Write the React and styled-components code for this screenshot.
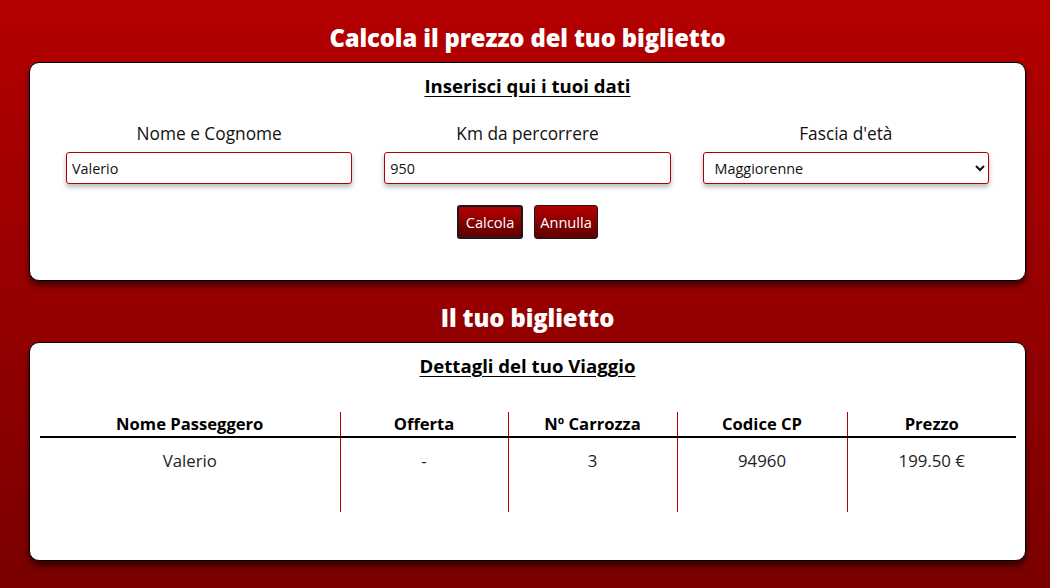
import React from "react";
import styled, { createGlobalStyle } from "styled-components";

const Global = createGlobalStyle`
  html, body { margin: 0; padding: 0; }
  body {
    min-height: 100vh;
    background: linear-gradient(to bottom, #b40000 0%, #7a0000 100%);
    font-family: "Open Sans", "Noto Sans", sans-serif;
  }
  #root { min-height: 100vh; }
`;

const Page = styled.main`
  padding: 20px 24px 20px 29px;
  display: flex;
  flex-direction: column;
  box-sizing: border-box;
`;

const Title = styled.h1`
  margin: 0 0 6px;
  text-align: center;
  color: #fff;
  font-size: 23.8px;
  font-weight: 800;
  line-height: 36px;
  letter-spacing: -0.1px;
`;

const Card = styled.section`
  background: #fff;
  border: 1px solid #000;
  border-radius: 10px;
  box-shadow: 0 5px 6px rgba(0, 0, 0, 0.55);
  height: 219px;
  box-sizing: border-box;
  padding: ${(p) => p.$pad};
  margin-bottom: ${(p) => p.$mb || "0"};
  display: flex;
  flex-direction: column;
`;

const SubTitle = styled.h2`
  margin: 0;
  text-align: center;
  font-size: 18.6px;
  font-weight: 700;
  text-decoration: underline;
  text-underline-offset: 3px;
  color: #000;
  line-height: 26px;
`;

const Fields = styled.div`
  display: grid;
  grid-template-columns: repeat(3, 1fr);
  margin-top: 23px;
`;

const Field = styled.label`
  display: flex;
  flex-direction: column;
  align-items: center;
  gap: 6px;
`;

const Label = styled.span`
  font-size: 17.3px;
  line-height: 24px;
  color: #111;
`;

const inputCss = `
  width: 90%;
  height: 32px;
  box-sizing: border-box;
  border: 1px solid #b00000;
  border-radius: 3px;
  box-shadow: 0 3px 5px rgba(0,0,0,0.28);
  font-family: "Open Sans", "Noto Sans", sans-serif;
  font-size: 14.4px;
  color: #111;
  background: #fff;
  outline: none;
`;

const Input = styled.input`
  ${inputCss}
  padding: 0 5px;
`;

const Select = styled.select`
  ${inputCss}
  padding: 0 6px 0 7px;
`;

const Buttons = styled.div`
  display: flex;
  justify-content: center;
  gap: 11px;
  margin-top: 21px;
`;

const Button = styled.button`
  height: 34px;
  padding: 0 4px;
  min-width: ${(p) => p.$w}px;
  box-sizing: border-box;
  border: ${(p) => (p.$focus ? "2px solid #1a1a1a" : "1px solid #1a1a1a")};
  border-radius: 3px;
  background: linear-gradient(to bottom, #b40000, #5e0000);
  color: #fff;
  font-family: "Open Sans", "Noto Sans", sans-serif;
  font-size: 14.6px;
  cursor: pointer;
`;

const Table = styled.table`
  width: 100%;
  border-collapse: collapse;
  margin-top: 33px;
  table-layout: fixed;
`;

const Th = styled.th`
  font-size: 16.6px;
  font-weight: 700;
  color: #000;
  height: 24px;
  line-height: 20px;
  padding: 0;
  vertical-align: middle;
  border-bottom: 2px solid #000;
  border-left: ${(p) => (p.$first ? "none" : "1px solid #b00000")};
`;

const Td = styled.td`
  text-align: center;
  font-size: 16.8px;
  line-height: 22px;
  color: #222;
  height: 62px;
  padding: 12px 0 0;
  vertical-align: top;
  border-left: ${(p) => (p.$first ? "none" : "1px solid #b00000")};
`;

const cols = [
  { name: "Nome Passeggero", w: 300, v: "Valerio" },
  { name: "Offerta", w: 168, v: "-" },
  { name: "Nº Carrozza", w: 169, v: "3" },
  { name: "Codice CP", w: 170, v: "94960" },
  { name: "Prezzo", w: 169, v: "199.50 €" },
];

export default function App() {
  return (
    <>
      <Global />
      <Page>
        <Title>Calcola il prezzo del tuo biglietto</Title>
        <Card $pad="10px 20px 0" $mb="19px">
          <SubTitle>Inserisci qui i tuoi dati</SubTitle>
          <Fields>
            <Field>
              <Label>Nome e Cognome</Label>
              <Input defaultValue="Valerio" />
            </Field>
            <Field>
              <Label>Km da percorrere</Label>
              <Input defaultValue="950" />
            </Field>
            <Field>
              <Label>Fascia d'età</Label>
              <Select defaultValue="Maggiorenne">
                <option>Maggiorenne</option>
                <option>Minorenne</option>
                <option>Over 65</option>
              </Select>
            </Field>
          </Fields>
          <Buttons>
            <Button $w={66} $focus>Calcola</Button>
            <Button $w={64}>Annulla</Button>
          </Buttons>
        </Card>
        <Title>Il tuo biglietto</Title>
        <Card $pad="10px 10px 0">
          <SubTitle>Dettagli del tuo Viaggio</SubTitle>
          <Table>
            <colgroup>
              {cols.map((c) => (
                <col key={c.name} style={{ width: c.w }} />
              ))}
            </colgroup>
            <thead>
              <tr>
                {cols.map((c, i) => (
                  <Th key={c.name} $first={i === 0}>{c.name}</Th>
                ))}
              </tr>
            </thead>
            <tbody>
              <tr>
                {cols.map((c, i) => (
                  <Td key={c.name} $first={i === 0}>{c.v}</Td>
                ))}
              </tr>
            </tbody>
          </Table>
        </Card>
      </Page>
    </>
  );
}
